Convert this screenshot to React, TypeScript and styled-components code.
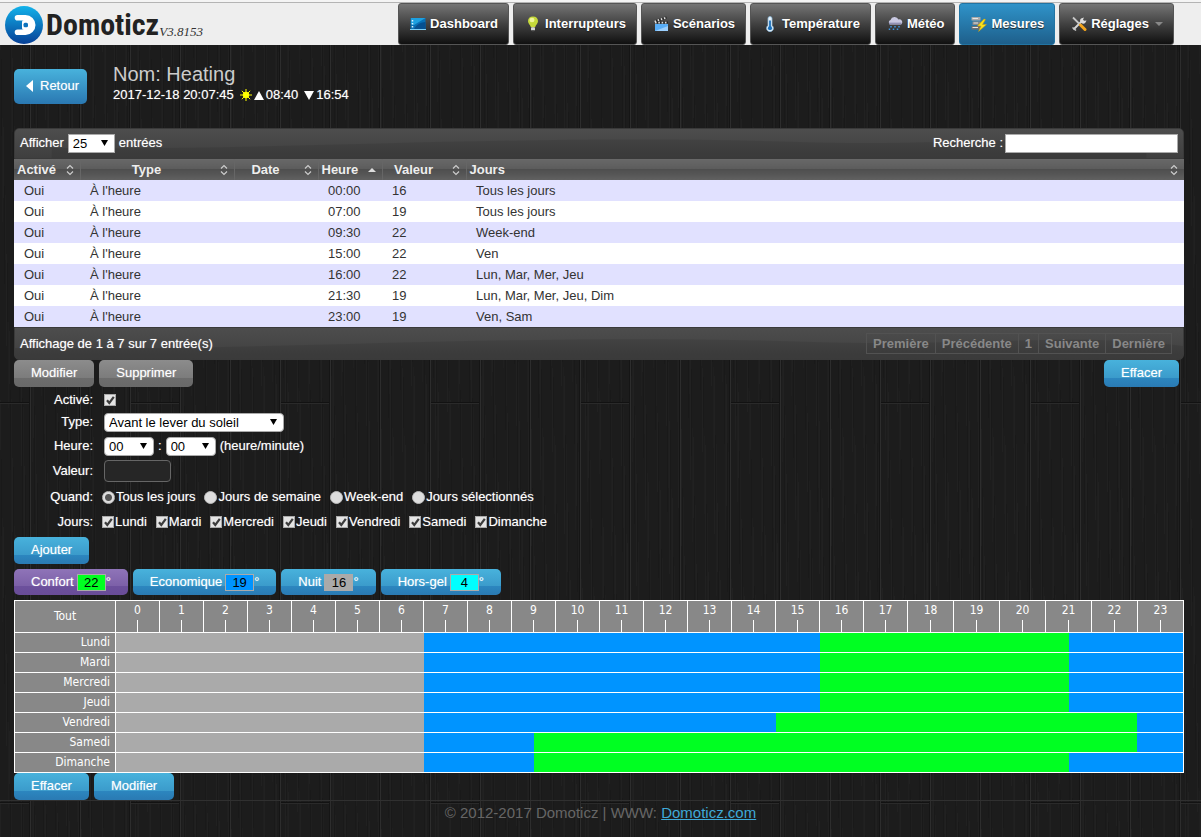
import React, { useState } from 'react';
import styled, { createGlobalStyle, css } from 'styled-components';

const svgUrl = (body: string, w: number, h: number) =>
  `url("data:image/svg+xml,${encodeURIComponent(
    `<svg xmlns='http://www.w3.org/2000/svg' width='${w}' height='${h}' viewBox='0 0 ${w} ${h}'>${body}</svg>`
  )}")`;

/* Dark wooden planks: three 50px boards per tile, the last one with a joint. */
const grain = Array.from({ length: 150 }, (_, i) => {
  const x = (i * 37) % 150;
  const y = (i * 83) % 400;
  const h = 50 + ((i * 29) % 110);
  const color = i % 3 === 0 ? '#212121' : i % 3 === 1 ? '#191919' : '#1f1f1f';
  return `<path d='M${x}.5 ${y}v${h}M${x}.5 ${y - 400}v${h}' stroke='${color}'/>`;
}).join('');
const planks = svgUrl(
  `<rect width='150' height='400' fill='#1c1c1c'/>${grain}` +
    [30, 80, 130]
      .map((x) => `<path d='M${x - 0.5} 0V400' stroke='#151515'/><path d='M${x + 0.5} 0V400' stroke='#2d2d2d'/>`)
      .join('') +
    `<path d='M131 2.5h19M0 2.5h29' stroke='#121212'/><path d='M131 3.5h19M0 3.5h29' stroke='#2a2a2a'/>`,
  150,
  400
);
const arrowDown = svgUrl(`<path d='M0 0H7L3.5 6Z' fill='#000'/>`, 7, 6);
const tick = svgUrl(`<path d='M2 5.2L4.3 8L8.8 1.8' fill='none' stroke='#3c3c3c' stroke-width='2.2'/>`, 10, 10);
const wave = svgUrl(
  `<path d='M0 20C250 24 500 4 800 14C950 19 1060 4 1170 18V40H0Z' fill='#000' fill-opacity='.08'/>`,
  1170,
  31
);

const GlobalStyle = createGlobalStyle`
  *, *::before, *::after { box-sizing: border-box; }
  body {
    margin: 0;
    background: #1c1c1c ${planks};
    color: #fff;
    font: 13px/20px "Liberation Sans", Arial, sans-serif;
  }
  button, input, select { font: inherit; margin: 0; }
`;

const glow = css`
  text-shadow: 0 0 1px rgba(255, 255, 255, 0.5);
`;

const Header = styled.header`
  display: flex;
  justify-content: space-between;
  align-items: flex-start;
  height: 45px;
  padding: 0 27px 0 5px;
  background: linear-gradient(#f4f4f4 2px, #b4b4b4 2px, #b4b4b4 3px, #eee 3px);
`;

const Brand = styled.a`
  display: flex;
  align-items: center;
  padding-top: 6px;
  color: #222;
  text-decoration: none;
`;

const BrandName = styled.span`
  margin-left: 3px;
  font: bold 30px/38px "Liberation Sans Narrow", "Roboto Condensed", sans-serif;
`;

const Version = styled.span`
  padding-top: 14px;
  font: italic 13px/20px "Liberation Serif", Georgia, serif;
  color: #333;
`;

const Nav = styled.nav`
  display: flex;
  gap: 4px;
  padding-top: 3px;
`;

const NavLink = styled.a<{ $active?: boolean }>`
  display: flex;
  align-items: center;
  gap: 4px;
  height: 42px;
  padding: 0 10px 0 11px;
  border: 1px solid ${(p) => (p.$active ? '#2274a3' : '#555')};
  border-radius: 3px;
  background: ${(p) => (p.$active ? 'linear-gradient(#2f93c9, #1e5f8b)' : 'linear-gradient(#757575, #414141 50%, #101010)')};
  color: #fff;
  font-weight: bold;
  text-decoration: none;
  text-shadow: 0 1px 1px #222;
`;

const Caret = styled.span`
  margin-left: 2px;
  border: 4px solid transparent;
  border-top-color: #888;
  border-bottom: 0;
`;

const Main = styled.main`
  padding: 19px 17px 0 14px;
`;

const Heading = styled.div`
  display: flex;
  gap: 26px;
  height: 64px;
`;

const Button = styled.button<{ $tone?: 'grey'; $tall?: boolean }>`
  display: inline-flex;
  align-items: center;
  justify-content: center;
  height: 27px;
  padding: 0 17px 2px;
  border: 0;
  border-radius: 5px;
  background: linear-gradient(#48b2dc, #3b9bcb 66%, #2c86bf 67%, #2a7ab3);
  color: #fff;
  cursor: pointer;
  ${glow}
  ${(p) => p.$tone === 'grey' && css`background: linear-gradient(#8c8c8c, #7c7c7c 66%, #6c6c6c 67%, #696969);`}
  ${(p) =>
    p.$tall &&
    css`
      height: 35px;
      margin-top: 5px;
      padding: 0 8px 2px 12px;
      gap: 7px;
      background: linear-gradient(#48b2dc, #2a78b2);
    `}
`;

const Title = styled.h1`
  margin: 0;
  font-size: 20px;
  line-height: 20px;
  font-weight: normal;
  color: #ccc;
`;

const SunLine = styled.p`
  display: flex;
  align-items: center;
  margin: 1px 0 0;
  ${glow}
`;

const SunTime = styled.span`
  display: inline-flex;
  align-items: center;
  gap: 2px;
  margin-right: 6px;
`;

const Bar = styled.div<{ $foot?: boolean }>`
  display: flex;
  justify-content: space-between;
  align-items: center;
  height: ${(p) => (p.$foot ? 33 : 31)}px;
  padding: 0 5px ${(p) => (p.$foot ? 0 : 1)}px;
  border: 1px solid #3a3a3a;
  border-radius: ${(p) => (p.$foot ? '0 0 5px 5px' : '5px 5px 0 0')};
  background: ${wave} 0 0 / 100% 100%, linear-gradient(#4d4d4d, #3f3f3f);
  ${glow}
`;

const Inline = styled.label<{ $gap?: number }>`
  display: flex;
  align-items: center;
  gap: ${(p) => p.$gap ?? 4}px;
`;

const Select = styled.select<{ $width: number; $square?: boolean }>`
  appearance: none;
  width: ${(p) => p.$width}px;
  height: 19px;
  padding: 0 4px;
  border: 1px solid #aaa;
  border-radius: ${(p) => (p.$square ? 0 : 4)}px;
  background: #fff ${arrowDown} no-repeat right 6px center;
  color: #000;
  line-height: 17px;
  text-shadow: none;
`;

const Search = styled.input`
  width: 173px;
  height: 19px;
  border: 1px solid #aaa;
  background: #fff;
`;

const Timers = styled.table`
  width: 100%;
  table-layout: fixed;
  border-collapse: collapse;
  color: #333;

  th {
    height: 21px;
    padding: 0 3px;
    background: linear-gradient(#686868, #5c5c5c 48%, #4e4e4e 50%, #606060);
    color: #eee;
    line-height: 21px;
  }
  th + th { border-left: 1px solid #666; }
  td {
    height: 21px;
    padding: 0 10px;
    line-height: 21px;
  }
  tbody tr { background: #fff; }
  tbody tr:nth-child(odd) { background: #e1e1ff; }
`;

const HeadCell = styled.div<{ $left?: boolean }>`
  display: flex;
  align-items: center;
  justify-content: space-between;
  gap: 10px;

  span { flex: 1; text-align: ${(p) => (p.$left ? 'left' : 'center')}; }
  svg { flex: none; margin-right: 3px; }
`;

const Pager = styled.div`
  display: flex;
  margin-right: 6px;
`;

const PageButton = styled.button`
  height: 21px;
  padding: 0 6px;
  border: 1px solid #525252;
  border-left-width: 0;
  background: transparent;
  color: #888;
  font-weight: bold;
  line-height: 17px;
  &:first-child { border-left-width: 1px; }
`;

const ButtonRow = styled.div<{ $top?: number }>`
  display: flex;
  gap: 5px;
  margin-top: ${(p) => p.$top ?? 0}px;
`;

const Split = styled.div`
  display: flex;
  justify-content: space-between;
  padding-right: 5px;
`;

const Form = styled.form`
  display: grid;
  grid-template-columns: 79px 1fr;
  grid-template-rows: 20px 24px 24px 26px 26px 24px;
  column-gap: 11px;
  align-items: center;
  padding: 3px 0 3px;
  ${glow}
`;

const FieldName = styled.label`
  text-align: right;
`;

const Field = styled.div<{ $choices?: boolean }>`
  display: flex;
  align-items: center;
  gap: ${(p) => (p.$choices ? 9 : 4)}px;
  margin-left: ${(p) => (p.$choices ? -2 : 0)}px;
`;

const Value = styled.input`
  width: 67px;
  height: 22px;
  border: 1px solid #666;
  border-radius: 4px;
  background: #262626;
  color: #fff;
`;

const Choice = styled.label`
  display: flex;
  align-items: center;
  gap: 1px;
`;

const Check = styled.input`
  appearance: none;
  width: 12px;
  height: 12px;
  border: 1px solid #aaa;
  background: #e4e4e4;
  &:checked { background: #e4e4e4 ${tick} center no-repeat; }
`;

const Radio = styled.input`
  appearance: none;
  width: 13px;
  height: 13px;
  border: 1px solid #bbb;
  border-radius: 50%;
  background: #dedede;
  &:checked { background: radial-gradient(circle, #555 3px, #dedede 4px); }
`;

const Mode = styled.div<{ $active?: boolean }>`
  display: flex;
  align-items: center;
  height: 26px;
  padding: 0 17px 1px;
  border-radius: 5px;
  background: ${(p) =>
    p.$active
      ? 'linear-gradient(#8f74b8, #7c60a8 66%, #6c509c 67%, #694c98)'
      : 'linear-gradient(#48b2dc, #3b9bcb 66%, #2c86bf 67%, #2a7ab3)'};
  ${glow}

  label { margin-right: 3px; }
`;

const ModeTemp = styled.input<{ $color: string }>`
  width: 29px;
  height: 17px;
  margin-top: 2px;
  padding: 0;
  border: 1px solid #aaa;
  background: ${(p) => p.$color};
  color: #000;
  text-align: center;
`;

const Week = styled.table`
  width: 100%;
  margin-top: 5px;
  table-layout: fixed;
  border-collapse: collapse;
  background: #888;
  font: 12px/19px "DejaVu Sans Condensed", "Open Sans", sans-serif;

  td, th {
    height: 20px;
    padding: 0;
    border: solid #fff;
    border-width: 1px 0;
    font-weight: normal;
  }
  th { border-width: 1px; }
  tr > :last-child { border-right-width: 1px; }
`;

const DayName = styled.th`
  && { padding-right: 5px; text-align: right; }
`;

const HourCell = styled.th`
  && { height: 32px; vertical-align: top; }
  &::after {
    content: '';
    display: block;
    width: 1px;
    height: 12px;
    margin: 0 auto;
    background: #fff;
  }
`;

const Slot = styled.td<{ $color: string }>`
  background: ${(p) => p.$color};
`;

const Footer = styled.footer`
  border-top: 1px solid #303030;
  padding: 2px 0 14px;
  text-align: center;
  font-size: 15px;
  color: #666;

  a { color: #3fa9d8; }
`;

const Logo = () => (
  <svg width="38" height="38" viewBox="0 0 38 38" aria-hidden="true">
    <defs>
      <linearGradient id="logo" x1="0" y1="0" x2="0" y2="1">
        <stop offset="0" stopColor="#12b2ea" />
        <stop offset="1" stopColor="#063f96" />
      </linearGradient>
    </defs>
    <circle cx="19" cy="19" r="19" fill="url(#logo)" />
    <path
      d="M12.500 9H20.500A10 10 0 0 1 20.500 29H12.500A2.700 2.700 0 0 1 12.500 23.400H20.500A4.400 4.400 0 0 0 20.500 14.600H12.500A2.700 2.700 0 0 1 12.500 9Z"
      fill="#fff"
    />
    <rect x="17" y="14" width="9" height="10" rx="2" fill="#fff" />
    <rect x="18.500" y="16.800" width="4.500" height="4.400" rx="1.500" fill="#0d73bd" />
  </svg>
);

const Icon = ({ children }: { children: React.ReactNode }) => (
  <svg width="16" height="16" viewBox="0 0 16 16" aria-hidden="true">{children}</svg>
);

const icons: Record<string, React.ReactNode> = {
  dashboard: (
    <>
      <rect x=".5" y="2" width="15" height="11.500" fill="#0870b5" />
      <path d="M1 2H15.500L4 9L1 8Z" fill="#1da0e0" />
      <path d="M4 13C7 8 11 6.500 15.500 6V13.500Z" fill="#065090" />
      <path d="M2.500 4v8" stroke="#d9f3ff" strokeWidth="1.500" strokeDasharray="1.500 1.500" />
      <path d="M0 13.500H16" stroke="#7fcff5" />
    </>
  ),
  bulb: (
    <>
      <path d="M8 .5C4.800 .5 3 2.600 3 5.200C3 7.500 5.200 8.800 5.900 11.200H10.100C10.800 8.800 13 7.500 13 5.200C13 2.600 11.200 .5 8 .5Z" fill="#c5d93a" />
      <ellipse cx="7" cy="4" rx="2.500" ry="2.300" fill="#f0f59a" />
      <rect x="6" y="11.300" width="4" height="3.200" rx="1" fill="#d8d8d8" />
      <rect x="6.800" y="14.300" width="2.400" height="1.200" fill="#444" />
    </>
  ),
  scene: (
    <>
      <rect x="2" y="7.500" width="13" height="7.500" fill="#58aef8" />
      <path d="M2 14.900H15V10Z" fill="#9bd0ff" />
      <path d="M1.500 5.500L13.500 1.500M2 6.700H15" stroke="#222" strokeWidth="2.200" />
      <path d="M1.500 5.500L13.500 1.500M2 6.700H15" stroke="#ddd" strokeWidth="1.800" strokeDasharray="1.600 1.700" />
    </>
  ),
  temp: (
    <>
      <path d="M6 2.500A2 2 0 0 1 10 2.500V9.500A3.400 3.400 0 1 1 6 9.500Z" fill="#e8f4fc" stroke="#8db8d8" strokeWidth=".8" />
      <path d="M8 4.500V12" stroke="#1c71bb" strokeWidth="1.800" />
      <circle cx="8" cy="12.200" r="2.100" fill="#1c71bb" />
    </>
  ),
  rain: (
    <>
      <path d="M3 8.500A2.500 2.500 0 0 1 3.500 4A4.300 4.300 0 0 1 11.500 3.500A2.600 2.600 0 0 1 13.500 8.500Z" fill="#c9c9e2" />
      <path d="M2 7.500H14.500" stroke="#9292b5" strokeWidth="1.800" />
      <path d="M4 10v1.500M8 10v1.500M12 10v1.500M2.500 12.500V14M6.500 12.500V14M10.500 12.500V14" stroke="#3c95e0" strokeWidth="1.500" />
    </>
  ),
  meter: (
    <>
      <rect x=".5" y="1" width="9" height="3.500" rx=".5" fill="#a9a9a9" />
      <rect x="1.500" y="5.500" width="8" height="3.500" rx=".5" fill="#888" />
      <rect x=".5" y="10" width="9" height="3.500" rx=".5" fill="#6f6f6f" />
      <path d="M1.500 2.500H7M2.500 7H7M1.500 11.500H7" stroke="#e6e6e6" />
      <path d="M13 3L6.500 10H10L7.500 15.500L15.500 8.500H11.500L14.500 3.500Z" fill="#f9e21b" stroke="#d69a00" strokeWidth=".5" />
    </>
  ),
  tools: (
    <>
      <path d="M2.500 13.500L11 5" stroke="#d5d5d5" strokeWidth="2" />
      <path d="M10 2.500A3 3 0 0 0 14.500 6.500L15.500 4.500L13 4.800L12 3.500L13 1.500Z" fill="#ddd" />
      <path d="M1.500 11.500L5 14.500" stroke="#c8c8c8" strokeWidth="1.600" />
      <path d="M2 1.500L9 8.500" stroke="#c8c8c8" strokeWidth="1.800" />
      <path d="M9.500 9L14 13.500" stroke="#f4a51c" strokeWidth="3" strokeLinecap="round" />
    </>
  ),
};

const SortIcon = ({ up }: { up?: boolean }) => (
  <svg width="8" height="12" viewBox="0 0 8 12" aria-hidden="true">
    {up ? <path d="M0 8H8L4 4Z" fill="#ddd" /> : <path d="M1 4.500L4 1.500L7 4.500M1 7.500L4 10.500L7 7.500" fill="none" stroke="#ccc" strokeWidth="1.200" />}
  </svg>
);

const SunIcon = () => (
  <svg width="12" height="12" viewBox="0 0 12 12" aria-hidden="true">
    <path d="M6 0V12M0 6H12M1.800 1.800L10.200 10.200M10.200 1.800L1.800 10.200" stroke="#ff0" strokeWidth="1" />
    <circle cx="6" cy="6" r="3.200" fill="#ff0" />
  </svg>
);

const Triangle = ({ down }: { down?: boolean }) => (
  <svg width="10" height="10" viewBox="0 0 10 10" aria-hidden="true">
    <path d={down ? 'M0 1H10L5 10Z' : 'M0 10H10L5 1Z'} fill="#fff" />
  </svg>
);

const NAV = [
  ['dashboard', 'Dashboard'],
  ['bulb', 'Interrupteurs'],
  ['scene', 'Scénarios'],
  ['temp', 'Température'],
  ['rain', 'Météo'],
  ['meter', 'Mesures'],
  ['tools', 'Réglages'],
];

const COLUMNS: [string, number | undefined][] = [
  ['Activé', 66], ['Type', 154], ['Date', 84], ['Heure', 64], ['Valeur', 84], ['Jours', undefined],
];

const ROWS = [
  ['00:00', '16', 'Tous les jours'],
  ['07:00', '19', 'Tous les jours'],
  ['09:30', '22', 'Week-end'],
  ['15:00', '22', 'Ven'],
  ['16:00', '22', 'Lun, Mar, Mer, Jeu'],
  ['21:30', '19', 'Lun, Mar, Mer, Jeu, Dim'],
  ['23:00', '19', 'Ven, Sam'],
];

const DAYS = ['Lundi', 'Mardi', 'Mercredi', 'Jeudi', 'Vendredi', 'Samedi', 'Dimanche'];

const CONFORT = '#00ff22';
const ECO = '#0094ff';
const NUIT = '#aaa';
const HORS_GEL = '#0ff';

const MODES: [string, string, string][] = [
  ['Confort', '22', CONFORT],
  ['Economique', '19', ECO],
  ['Nuit', '16', NUIT],
  ['Hors-gel', '4', HORS_GEL],
];

/* Start and end of the comfort period of each day, in half hours. */
const COMFORT_SPANS = [[32, 43], [32, 43], [32, 43], [32, 43], [30, 46], [19, 46], [19, 43]];

export default function App() {
  const [mode, setMode] = useState('Confort');
  return (
    <>
      <GlobalStyle />
      <Header>
        <Brand href="#home">
          <Logo />
          <BrandName>Domoticz</BrandName>
          <Version>V3.8153</Version>
        </Brand>
        <Nav>
          {NAV.map(([icon, label]) => (
            <NavLink key={label} href={`#${icon}`} $active={icon === 'meter'}>
              <Icon>{icons[icon]}</Icon>
              {label}
              {icon === 'tools' && <Caret />}
            </NavLink>
          ))}
        </Nav>
      </Header>
      <Main>
        <Heading>
          <div>
            <Button type="button" $tall>
              <svg width="7" height="12" viewBox="0 0 7 12" aria-hidden="true"><path d="M7 0V12L0 6Z" fill="#fff" /></svg>
              Retour
            </Button>
          </div>
          <div>
            <Title>Nom: Heating</Title>
            <SunLine>
              <SunTime>2017-12-18 20:07:45</SunTime>
              <SunTime><SunIcon /><Triangle />08:40</SunTime>
              <SunTime><Triangle down />16:54</SunTime>
            </SunLine>
          </div>
        </Heading>

        <Bar>
          <Inline>
            Afficher
            <Select $width={47} $square defaultValue="25">
              <option>25</option>
              <option>50</option>
              <option>100</option>
            </Select>
            entrées
          </Inline>
          <Inline $gap={2}>Recherche :<Search type="search" /></Inline>
        </Bar>
        <Timers>
          <colgroup>
            {COLUMNS.map(([name, width]) => <col key={name} width={width} />)}
          </colgroup>
          <thead>
            <tr>
              {COLUMNS.map(([name]) => (
                <th key={name} scope="col">
                  <HeadCell $left={name === 'Jours'}>
                    <span>{name}</span>
                    <SortIcon up={name === 'Heure'} />
                  </HeadCell>
                </th>
              ))}
            </tr>
          </thead>
          <tbody>
            {ROWS.map(([time, value, days]) => (
              <tr key={time}>
                <td>Oui</td>
                <td>À l'heure</td>
                <td />
                <td>{time}</td>
                <td>{value}</td>
                <td>{days}</td>
              </tr>
            ))}
          </tbody>
        </Timers>
        <Bar $foot>
          <span>Affichage de 1 à 7 sur 7 entrée(s)</span>
          <Pager>
            {['Première', 'Précédente', '1', 'Suivante', 'Dernière'].map((p) => (
              <PageButton key={p} type="button">{p}</PageButton>
            ))}
          </Pager>
        </Bar>
        <Split>
          <ButtonRow>
            <Button type="button" $tone="grey">Modifier</Button>
            <Button type="button" $tone="grey">Supprimer</Button>
          </ButtonRow>
          <Button type="button">Effacer</Button>
        </Split>

        <Form>
          <FieldName htmlFor="active">Activé:</FieldName>
          <Field><Check id="active" type="checkbox" defaultChecked /></Field>
          <FieldName htmlFor="type">Type:</FieldName>
          <Field>
            <Select id="type" $width={180}><option>Avant le lever du soleil</option></Select>
          </Field>
          <FieldName htmlFor="hour">Heure:</FieldName>
          <Field>
            <Select id="hour" $width={50}><option>00</option></Select>:
            <Select aria-label="Minute" $width={50}><option>00</option></Select>
            (heure/minute)
          </Field>
          <FieldName htmlFor="value">Valeur:</FieldName>
          <Field><Value id="value" type="text" /></Field>
          <FieldName as="span">Quand:</FieldName>
          <Field $choices>
            {['Tous les jours', 'Jours de semaine', 'Week-end', 'Jours sélectionnés'].map((w, i) => (
              <Choice key={w}><Radio type="radio" name="when" defaultChecked={i === 0} />{w}</Choice>
            ))}
          </Field>
          <FieldName as="span">Jours:</FieldName>
          <Field $choices>
            {DAYS.map((d) => (
              <Choice key={d}><Check type="checkbox" defaultChecked />{d}</Choice>
            ))}
          </Field>
        </Form>
        <Button type="button">Ajouter</Button>

        <ButtonRow $top={5}>
          {MODES.map(([name, temp, color]) => (
            <Mode key={name} $active={name === mode} onClick={() => setMode(name)}>
              <label htmlFor={name}>{name}</label>
              <ModeTemp id={name} type="text" defaultValue={temp} $color={color} />°
            </Mode>
          ))}
        </ButtonRow>

        <Week>
          <colgroup>
            <col width={101} />
            {Array.from({ length: 48 }, (_, i) => <col key={i} width={i < 36 ? 22 : undefined} />)}
          </colgroup>
          <thead>
            <tr>
              <th scope="col">Tout</th>
              {Array.from({ length: 24 }, (_, h) => <HourCell key={h} scope="col" colSpan={2}>{h}</HourCell>)}
            </tr>
          </thead>
          <tbody>
            {DAYS.map((day, d) => {
              const [start, end] = COMFORT_SPANS[d];
              return (
                <tr key={day}>
                  <DayName scope="row">{day}</DayName>
                  <Slot colSpan={14} $color={NUIT} />
                  <Slot colSpan={start - 14} $color={ECO} />
                  <Slot colSpan={end - start} $color={CONFORT} />
                  <Slot colSpan={48 - end} $color={ECO} />
                </tr>
              );
            })}
          </tbody>
        </Week>
        <ButtonRow>
          <Button type="button">Effacer</Button>
          <Button type="button">Modifier</Button>
        </ButtonRow>
      </Main>
      <Footer>
        © 2012-2017 Domoticz | WWW: <a href="#domoticz">Domoticz.com</a>
      </Footer>
    </>
  );
}
